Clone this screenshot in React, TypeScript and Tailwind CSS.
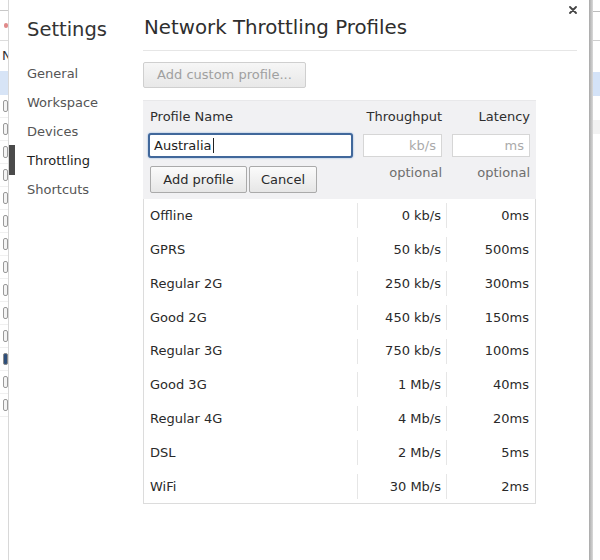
import React from "react";

const rows: [string, string, string][] = [
  ["Offline", "0 kb/s", "0ms"],
  ["GPRS", "50 kb/s", "500ms"],
  ["Regular 2G", "250 kb/s", "300ms"],
  ["Good 2G", "450 kb/s", "150ms"],
  ["Regular 3G", "750 kb/s", "100ms"],
  ["Good 3G", "1 Mb/s", "40ms"],
  ["Regular 4G", "4 Mb/s", "20ms"],
  ["DSL", "2 Mb/s", "5ms"],
  ["WiFi", "30 Mb/s", "2ms"],
];

const side = ["General", "Workspace", "Devices", "Throttling", "Shortcuts"];

function LeftStrip() {
  const boxes = Array.from({ length: 14 }, (_, i) => i);
  return (
    <div className="w-[9px] shrink-0 bg-white border-r border-[#d8d8d8] flex flex-col overflow-hidden relative">
      <div className="h-[11px] border-b border-[#c8c8c8]" />
      <div className="h-[30px] border-b border-[#dcdcdc] flex items-center pl-[4px]">
        <div className="w-[4px] h-[5px] rounded-full bg-[#e08a8a]" />
      </div>
      <div className="h-[30px] flex items-center text-[13px] text-[#333] pl-[2px] whitespace-nowrap">N</div>
      <div className="h-[24px] bg-[#d7e4f6]" />
      <div className="flex flex-col">
        {boxes.map((i) => (
          <div key={i} className="h-[23px] flex items-center pl-[3px] border-b border-[#f0f0f0]">
            <div
              className={
                i === 11
                  ? "w-[8px] h-[12px] border border-[#8a8a8a] rounded-[2px] bg-[#2d4e7a]"
                  : "w-[8px] h-[12px] border border-[#9a9a9a] rounded-[2px] bg-[#f4f4f4]"
              }
            />
          </div>
        ))}
      </div>
    </div>
  );
}

function RightStrip() {
  return (
    <div className="w-[11px] shrink-0 flex">
      <div className="w-[4px] bg-gradient-to-r from-[#a8a8a8] to-[#dadada]" />
      <div className="flex-1 bg-white flex flex-col">
        <div className="h-[12px] border-b border-[#bdbdbd]" />
        <div className="h-[29px] border-b border-[#cfcfcf]" />
        <div className="h-[31px]" />
        <div className="h-[24px] bg-[#d4e3f8]" />
        <div className="h-[24px]" />
        <div className="h-[14px] bg-[#f2f2f2]" />
      </div>
    </div>
  );
}

export default function App() {
  return (
    <div className="w-[600px] h-[560px] flex bg-white overflow-hidden font-['DejaVu_Sans',sans-serif] text-[#333]">
      <LeftStrip />
      <div className="flex-1 flex relative">
        <div className="absolute left-0 top-[145px] w-[6px] h-[30px] bg-[#4a4a4a]" />
        <svg className="absolute left-[560px] top-[6px]" width="8" height="8" viewBox="0 0 8 8">
          <path d="M1 1L7 7M7 1L1 7" stroke="#444" strokeWidth="1.8" strokeLinecap="round" />
        </svg>
        <div className="w-[134px] shrink-0 pl-[18px] pt-[18px]">
          <div className="text-[19.5px] leading-[24px] text-[#333]">Settings</div>
          <div className="mt-[17px] flex flex-col">
            {side.map((s) => (
              <div
                key={s}
                className={
                  s === "Throttling"
                    ? "h-[29px] leading-[29px] text-[13px] text-[#1e1e1e]"
                    : "h-[29px] leading-[29px] text-[13px] text-[#555]"
                }
              >
                {s}
              </div>
            ))}
          </div>
        </div>
        <div className="flex-1 pr-[12px] pt-[16px] flex flex-col">
          <div className="pb-[10px] border-b border-[#e6e6e6]">
            <div className="text-[19.8px] leading-[24px] pl-[1px] text-[#2e2e2e]">Network Throttling Profiles</div>
          </div>
          <div className="mt-[11px]">
            <div className="w-[163px] h-[26px] rounded-[2px] border border-[#cfcfcf] bg-gradient-to-b from-[#f6f6f6] to-[#e8e8e8] text-[13px] text-[#a0a0a0] flex items-center justify-center">
              Add custom profile...
            </div>
          </div>
          <div className="mt-[12px] w-[393px]">
            <div className="bg-[#f1f1f3] border-t border-[#e8e8ea] pt-[8px] pl-[5px] pr-[6px] pb-[6px]">
              <div className="grid grid-cols-[205px_79px_78px] gap-x-[10px]">
                <div className="h-[16px] leading-[16px] text-[13px] pl-[2px] text-[#2e2e2e]">Profile Name</div>
                <div className="h-[16px] leading-[16px] text-[13px] text-right text-[#2e2e2e]">Throughput</div>
                <div className="h-[16px] leading-[16px] text-[13px] text-right text-[#2e2e2e]">Latency</div>
                <div className="mt-[8px] h-[25px] rounded-[3px] border-2 border-[#41689b] shadow-[0_0_2px_#7fa6d8] bg-white flex items-center pl-[4px] text-[13px] text-[#222]">
                  Australia<span className="inline-block w-[1px] h-[15px] bg-[#222] ml-[1px]" />
                </div>
                <div className="mt-[9px] h-[23px] border border-[#d6d6d6] bg-white flex items-center justify-end pr-[5px] text-[13px] text-[#aaa]">
                  kb/s
                </div>
                <div className="mt-[9px] h-[23px] border border-[#d6d6d6] bg-white flex items-center justify-end pr-[5px] text-[13px] text-[#aaa]">
                  ms
                </div>
                <div className="mt-[8px] flex gap-[2px] pl-[2px]">
                  <div className="w-[97px] h-[27px] rounded-[2px] border border-[#aaa] bg-gradient-to-b from-[#fbfbfb] to-[#e6e6e6] text-[13px] text-[#2a2a2a] flex items-center justify-center">
                    Add profile
                  </div>
                  <div className="w-[68px] h-[27px] rounded-[2px] border border-[#aaa] bg-gradient-to-b from-[#fbfbfb] to-[#e6e6e6] text-[13px] text-[#2a2a2a] flex items-center justify-center">
                    Cancel
                  </div>
                </div>
                <div className="mt-[7px] text-[13px] leading-[16px] text-right text-[#6e6e6e]">optional</div>
                <div className="mt-[7px] text-[13px] leading-[16px] text-right text-[#6e6e6e]">optional</div>
              </div>
            </div>
            <div className="border-l border-r border-b border-[#dcdcdc] bg-white">
              {rows.map(([n, t, l]) => (
                <div key={n} className="grid grid-cols-[213px_89px_1fr] h-[33.8px] items-center text-[13px] text-[#2a2a2a]">
                  <div className="pl-[6px]">{n}</div>
                  <div className="h-[25px] border-l border-[#e6e6e6] flex items-center justify-end pr-[5px]">{t}</div>
                  <div className="h-[25px] border-l border-[#e6e6e6] flex items-center justify-end pr-[6px]">{l}</div>
                </div>
              ))}
            </div>
          </div>
        </div>
      </div>
      <RightStrip />
    </div>
  );
}
